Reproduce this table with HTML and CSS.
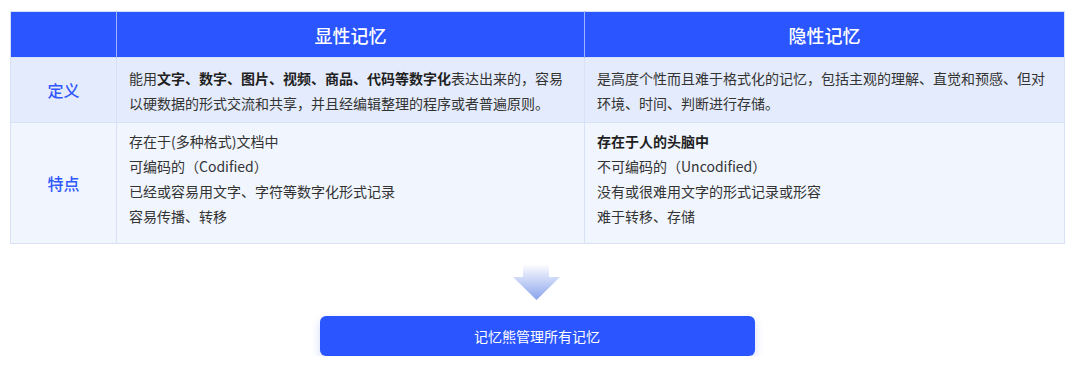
FILE: index.html
```html
<!DOCTYPE html>
<html lang="zh-CN">
<head>
<meta charset="utf-8">
<link rel="stylesheet" href="styles.css">
</head>
<body>
<div class="page">
  <table class="memtable">
    <colgroup>
      <col class="c-label">
      <col class="c-main">
      <col class="c-side">
    </colgroup>
    <thead>
      <tr class="head">
        <th></th>
        <th>显性记忆</th>
        <th>隐性记忆</th>
      </tr>
    </thead>
    <tbody>
      <tr class="row-def">
        <td class="label">定义</td>
        <td class="text">能用<b>文字、数字、图片、视频、商品、代码等数字化</b>表达出来的，容易以硬数据的形式交流和共享，并且经编辑整理的程序或者普遍原则。</td>
        <td class="text">是高度个性而且难于格式化的记忆，包括主观的理解、直觉和预感、但对环境、时间、判断进行存储。</td>
      </tr>
      <tr class="row-feat">
        <td class="label">特点</td>
        <td class="text">
          <div>存在于(多种格式)文档中</div>
          <div>可编码的（Codified）</div>
          <div>已经或容易用文字、字符等数字化形式记录</div>
          <div>容易传播、转移</div>
        </td>
        <td class="text">
          <div><b>存在于人的头脑中</b></div>
          <div>不可编码的（Uncodified）</div>
          <div>没有或很难用文字的形式记录或形容</div>
          <div>难于转移、存储</div>
        </td>
      </tr>
    </tbody>
  </table>
  <div class="flow">
    <svg class="arrow" width="48" height="37" viewBox="0 0 48 37">
      <defs>
        <linearGradient id="ag" x1="0" y1="0" x2="0" y2="1">
          <stop offset="0" stop-color="#ffffff"/>
          <stop offset="0.35" stop-color="#d5def8"/>
          <stop offset="1" stop-color="#8aa2ec"/>
        </linearGradient>
      </defs>
      <path d="M10 0 H36 V13 H47 L23.5 36 L0 13 H10 Z" fill="url(#ag)"/>
    </svg>
    <div class="cta">记忆熊管理所有记忆</div>
  </div>
</div>
</body>
</html>
```

FILE: styles.css
```css
html, body {
  margin: 0;
  padding: 0;
  background: #ffffff;
}
body {
  font-family: "Noto Sans CJK SC", "Noto Sans", sans-serif;
  color: #333333;
}
.page {
  padding: 11px 0 0 10px;
  width: 1054px;
}
.memtable {
  width: 1054px;
  border-collapse: collapse;
  table-layout: fixed;
}
.c-label { width: 106px; }
.c-main { width: 468px; }
.c-side { width: 480px; }

.head th {
  height: 45px;
  padding: 0;
  background: #2a55ff;
  color: #ffffff;
  font-size: 18px;
  font-weight: 500;
  text-align: center;
  border: 1px solid #9fb3ff;
  border-top-color: #d6e0f8;
  border-bottom: none;
}
.head th:first-child { border-left-color: #d6e0f8; }
.head th:last-child { border-right-color: #d6e0f8; }

.memtable td {
  border: 1px solid #d8e2f6;
  vertical-align: top;
}
.row-def td { background: #e4ebfc; height: 65px; box-sizing: border-box; }
.row-feat td { background: #f0f5fe; height: 121px; box-sizing: border-box; }

.label {
  text-align: center;
  vertical-align: middle !important;
  color: #3158ff;
  font-size: 16px;
  font-weight: 500;
}
.text {
  font-size: 14px;
  line-height: 25px;
  color: #333333;
}
.text b { font-weight: 700; color: #1f1f1f; }
.row-def .text { padding: 8px 13px 6px 12px; }
.row-feat .text { padding: 6px 13px 13px 12px; }

.flow {
  display: flex;
  flex-direction: column;
  align-items: center;
  padding-top: 20px;
}
.arrow { display: block; }
.cta {
  margin-top: 15px;
  width: 435px;
  height: 40px;
  border-radius: 6px;
  background: #2b55ff;
  color: #ffffff;
  font-size: 14px;
  display: flex;
  align-items: center;
  justify-content: center;
  box-shadow: 0 4px 10px rgba(60, 95, 230, 0.22);
}
```
